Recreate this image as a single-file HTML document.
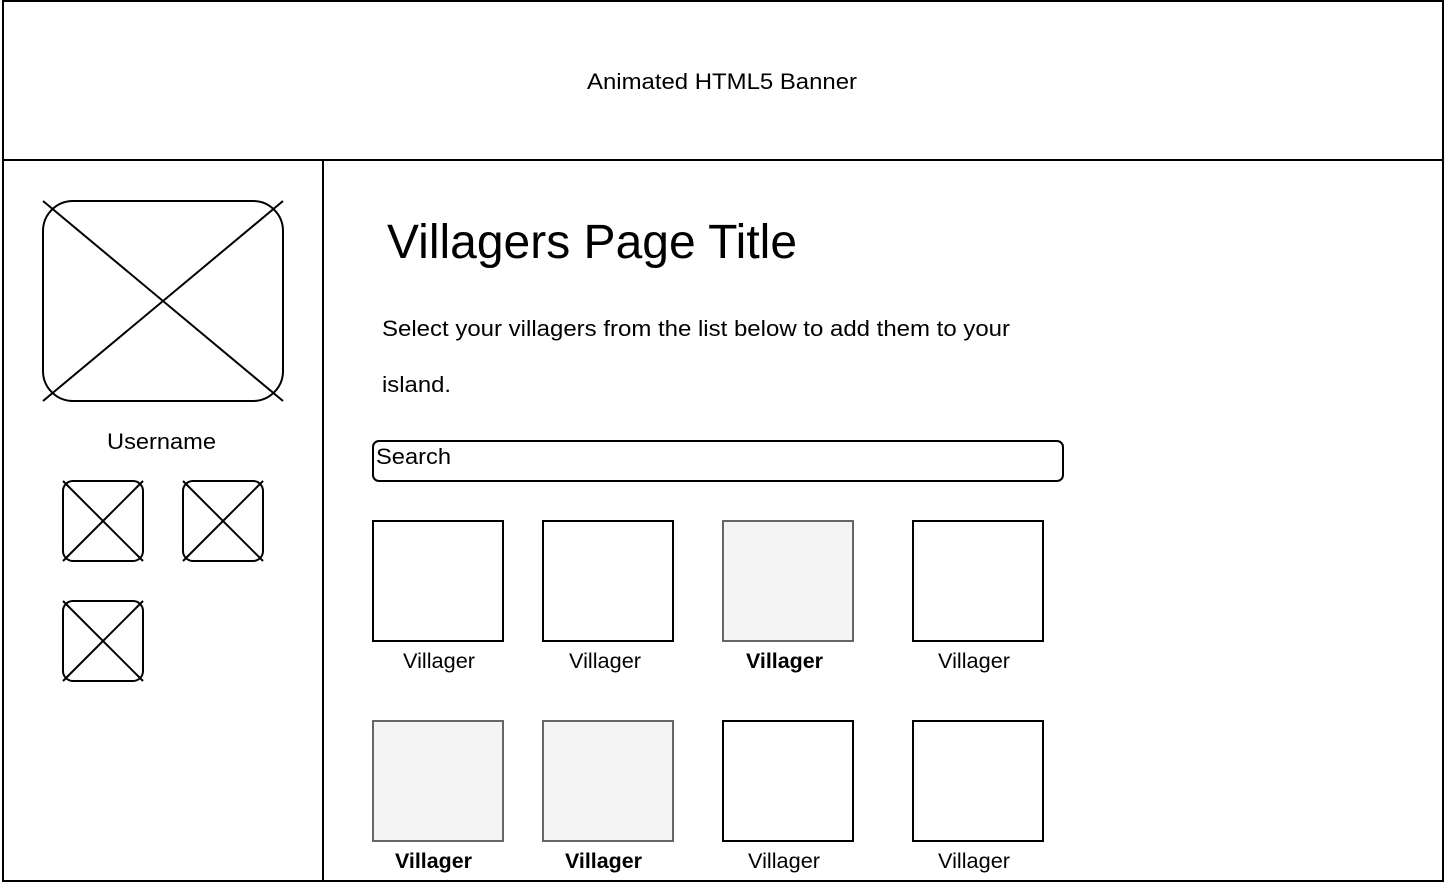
<!DOCTYPE html>
<html><head><meta charset="utf-8"><style>
html,body{margin:0;padding:0;background:#fff;width:1448px;height:888px;overflow:hidden}
svg{display:block}
text{font-family:"Liberation Sans",Arial,sans-serif;fill:#000}
</style></head><body>
<svg width="1448" height="888" viewBox="0 0 1448 888">
<g stroke="#000" stroke-width="2" fill="none">
<rect x="3" y="1" width="1440" height="880"/>
<line x1="3" y1="160" x2="1443" y2="160"/>
<line x1="323" y1="160" x2="323" y2="881"/>
<rect x="43" y="201" width="240" height="200" rx="30"/>
<line x1="43" y1="201" x2="283" y2="401"/><line x1="283" y1="201" x2="43" y2="401"/>
<rect x="63" y="481" width="80" height="80" rx="10"/>
<line x1="63" y1="481" x2="143" y2="561"/><line x1="143" y1="481" x2="63" y2="561"/>
<rect x="183" y="481" width="80" height="80" rx="10"/>
<line x1="183" y1="481" x2="263" y2="561"/><line x1="263" y1="481" x2="183" y2="561"/>
<rect x="63" y="601" width="80" height="80" rx="10"/>
<line x1="63" y1="601" x2="143" y2="681"/><line x1="143" y1="601" x2="63" y2="681"/>
<rect x="373" y="441" width="690" height="40" rx="6"/>
<rect x="373" y="521" width="130" height="120"/>
<rect x="543" y="521" width="130" height="120"/>
<rect x="723" y="521" width="130" height="120" fill="#f4f4f4" stroke="#666"/>
<rect x="913" y="521" width="130" height="120"/>
<rect x="373" y="721" width="130" height="120" fill="#f4f4f4" stroke="#666"/>
<rect x="543" y="721" width="130" height="120" fill="#f4f4f4" stroke="#666"/>
<rect x="723" y="721" width="130" height="120"/>
<rect x="913" y="721" width="130" height="120"/>
</g>
<text x="587" y="89" font-size="22" textLength="270" lengthAdjust="spacingAndGlyphs">Animated HTML5 Banner</text>
<text x="387" y="258" font-size="48">Villagers Page Title</text>
<text x="382" y="336" font-size="22" textLength="628" lengthAdjust="spacingAndGlyphs">Select your villagers from the list below to add them to your</text>
<text x="382" y="392" font-size="22" textLength="69" lengthAdjust="spacingAndGlyphs">island.</text>
<text x="107" y="449" font-size="22" textLength="109" lengthAdjust="spacingAndGlyphs">Username</text>
<text x="376" y="464" font-size="22" textLength="75" lengthAdjust="spacingAndGlyphs">Search</text>
<g font-size="21">
<text x="403" y="668" textLength="72" lengthAdjust="spacingAndGlyphs">Villager</text>
<text x="569" y="668" textLength="72" lengthAdjust="spacingAndGlyphs">Villager</text>
<text x="746" y="668" font-weight="bold" textLength="77" lengthAdjust="spacingAndGlyphs">Villager</text>
<text x="938" y="668" textLength="72" lengthAdjust="spacingAndGlyphs">Villager</text>
<text x="395" y="868" font-weight="bold" textLength="77" lengthAdjust="spacingAndGlyphs">Villager</text>
<text x="565" y="868" font-weight="bold" textLength="77" lengthAdjust="spacingAndGlyphs">Villager</text>
<text x="748" y="868" textLength="72" lengthAdjust="spacingAndGlyphs">Villager</text>
<text x="938" y="868" textLength="72" lengthAdjust="spacingAndGlyphs">Villager</text>
</g>
</svg>
</body></html>
